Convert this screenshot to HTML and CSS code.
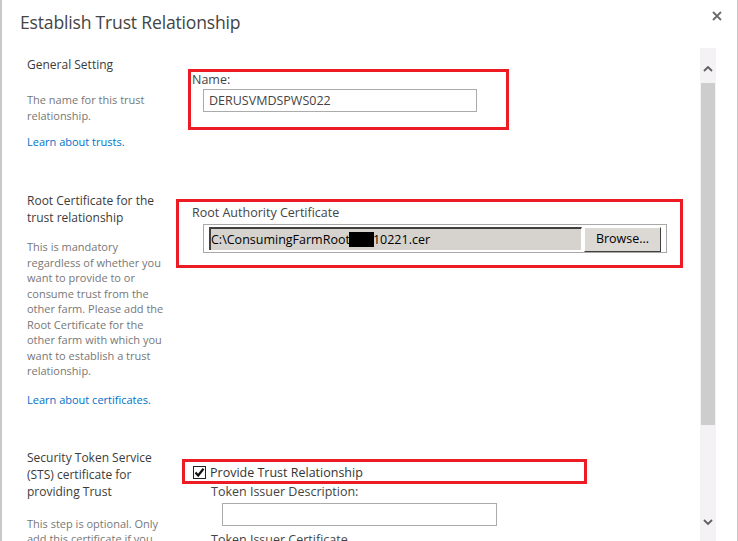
FILE: index.html
```html
<!DOCTYPE html>
<html lang="en">
<head>
<meta charset="utf-8">
<title>Establish Trust Relationship</title>
<link rel="stylesheet" href="styles.css">
</head>
<body>
<div class="dialog">
  <div class="header">
    <h1 class="title">Establish Trust Relationship</h1>
    <span class="close" aria-label="Close">
      <svg width="10" height="10" viewBox="0 0 10 10"><path d="M1 1 L9 9 M9 1 L1 9" stroke="#6a6a6a" stroke-width="1.8" fill="none"/></svg>
    </span>
  </div>
  <div class="body">
    <div class="content">
      <section class="sec sec-general">
        <div class="side">
          <div class="side-title">General Setting</div>
          <p class="side-desc desc-general">The name for this trust<br>relationship.</p>
          <a class="side-link link-general" href="#">Learn about trusts.</a>
        </div>
        <div class="main">
          <div class="callout callout-name">
            <div class="label">Name:</div>
            <div class="text-input name-input">DERUSVMDSPWS022</div>
          </div>
        </div>
      </section>

      <section class="sec sec-root">
        <div class="side">
          <div class="side-title">Root Certificate for the<br>trust relationship</div>
          <p class="side-desc desc-root">This is mandatory<br>regardless of whether you<br>want to provide to or<br>consume trust from the<br>other farm. Please add the<br>Root Certificate for the<br>other farm with which you<br>want to establish a trust<br>relationship.</p>
          <a class="side-link link-root" href="#">Learn about certificates.</a>
        </div>
        <div class="main">
          <div class="callout callout-root">
            <div class="label label-root">Root Authority Certificate</div>
            <div class="file">
              <div class="file-field">C:\ConsumingFarmRoot<span class="redact"></span>10221.cer</div>
              <div class="file-btn">Browse...</div>
            </div>
          </div>
        </div>
      </section>

      <section class="sec sec-sts">
        <div class="side">
          <div class="side-title">Security Token Service<br>(STS) certificate for<br>providing Trust</div>
          <p class="side-desc desc-sts">This step is optional. Only<br>add this certificate if you</p>
        </div>
        <div class="main">
          <div class="callout callout-check">
            <span class="checkbox">
              <svg width="11" height="11" viewBox="0 0 11 11"><path d="M1.5 5.5 L4.2 8.5 L9.5 1.8" stroke="#111" stroke-width="2.2" fill="none"/></svg>
            </span>
            <span class="check-label">Provide Trust Relationship</span>
          </div>
          <div class="label sub-label">Token Issuer Description:</div>
          <div class="text-input desc-input"></div>
          <div class="label sub-label cert-label">Token Issuer Certificate</div>
        </div>
      </section>
    </div>
    <div class="scrollbar">
      <div class="sb-arrow sb-up">
        <svg width="10" height="6" viewBox="0 0 10 6"><path d="M1 5 L5 1 L9 5" stroke="#606060" stroke-width="1.8" fill="none"/></svg>
      </div>
      <div class="sb-thumb"></div>
      <div class="sb-rest">
        <svg width="10" height="6" viewBox="0 0 10 6"><path d="M1 1 L5 5 L9 1" stroke="#606060" stroke-width="1.8" fill="none"/></svg>
      </div>
    </div>
    <div class="gutter"></div>
  </div>
</div>
</body>
</html>
```

FILE: styles.css
```css
html, body {
  margin: 0;
  padding: 0;
  background: #fff;
}

body {
  font-family: "Open Sans", "Noto Sans", sans-serif;
  color: #444;
}

.dialog {
  width: 738px;
  height: 541px;
  box-sizing: border-box;
  border-left: 2px solid #c8c8c8;
  border-right: 1px solid #c8c8c8;
  display: flex;
  flex-direction: column;
  overflow: hidden;
}

.header {
  height: 48px;
  flex: none;
  display: flex;
  justify-content: space-between;
  align-items: flex-start;
}

.title {
  margin: 10px 0 0 18px;
  font-size: 17.6px;
  font-weight: 400;
  line-height: 24px;
  color: #444;
  letter-spacing: -0.2px;
}

.close {
  margin: 11px 15px 0 0;
  display: block;
  width: 10px;
  height: 10px;
}
.close svg { display: block; }

.body {
  flex: 1;
  display: flex;
  min-height: 0;
}

.content {
  width: 698px;
  flex: none;
  padding: 8px 0 0 25px;
  box-sizing: border-box;
  overflow: hidden;
}

.sec {
  display: flex;
}

.side {
  width: 149px;
  flex: none;
}

.main {
  flex: 1;
}

.side-title {
  font-size: 12px;
  line-height: 17px;
  color: #3b3b3b;
}

.side-desc {
  margin: 0;
  font-size: 11px;
  line-height: 15.5px;
  color: #777;
}

.side-link {
  display: block;
  font-size: 11px;
  line-height: 16px;
  color: #0072c6;
  text-decoration: none;
}

.desc-general { margin-top: 19px; }
.link-general { margin-top: 11px; }

.sec-root { margin-top: 42px; }
.desc-root { margin-top: 13px; }
.link-root { margin-top: 13px; }

.sec-sts { margin-top: 41px; }
.desc-sts { margin-top: 16px; }

.callout {
  border: 3px solid #ed1c24;
  box-sizing: border-box;
}

.label {
  font-size: 12.5px;
  line-height: 16px;
  color: #444;
}

.callout-name {
  margin: 13px 0 0 12px;
  width: 321px;
  height: 61px;
  padding: 0 0 0 1px;
}

.text-input {
  box-sizing: border-box;
  height: 23px;
  border: 1px solid #ababab;
  background: #fff;
  font-size: 12.5px;
  line-height: 21px;
  padding: 0 5px;
  color: #444;
}

.name-input {
  margin: 1px 0 0 11px;
  width: 274px;
}

.callout-root {
  margin-top: 7px;
  width: 507px;
  height: 69px;
  padding: 3px 13px 0 13px;
}

.file {
  margin: 3px 0 0 11px;
  height: 29px;
  box-sizing: border-box;
  border: 1px solid #a8a8a8;
  display: flex;
  gap: 2px;
  padding: 2px 5px 0 5px;
}

.file-field {
  flex: 1;
  height: 23px;
  box-sizing: border-box;
  background: #d6d3ce;
  border-top: 2px solid #404040;
  border-left: 2px solid #404040;
  border-right: 1px solid #fff;
  font-size: 12.5px;
  line-height: 21px;
  color: #000;
  padding-left: 0;
  white-space: nowrap;
  overflow: hidden;
}

.redact {
  display: inline-block;
  width: 25px;
  height: 15px;
  background: #000;
  vertical-align: -3px;
  margin-left: -1px;
  margin-right: -1px;
}

.file-btn {
  width: 77px;
  flex: none;
  height: 25px;
  box-sizing: border-box;
  background: #dcd9d4;
  border-top: 1px solid #fff;
  border-left: 1px solid #fff;
  border-right: 1px solid #404040;
  border-bottom: 1px solid #404040;
  font-size: 12.5px;
  line-height: 22px;
  text-align: center;
  color: #000;
}

.callout-check {
  margin: 10px 0 0 6px;
  width: 405px;
  height: 25px;
  display: flex;
  align-items: flex-start;
  padding-left: 8px;
}

.checkbox {
  width: 13px;
  height: 13px;
  box-sizing: border-box;
  border: 1px solid #222;
  display: flex;
  align-items: center;
  justify-content: center;
  background: #fff;
  margin-top: 4px;
}
.checkbox svg { display: block; }

.check-label {
  margin: 3px 0 0 4px;
  font-size: 12.5px;
  line-height: 16px;
  color: #333;
}

.sub-label {
  margin-left: 35px;
}

.desc-input {
  margin: 3px 0 0 46px;
  width: 275px;
}

.cert-label {
  margin-top: 6px;
}

.scrollbar {
  width: 16px;
  flex: none;
  background: #f5f2f5;
  display: flex;
  flex-direction: column;
}

.sb-arrow {
  height: 35px;
  display: flex;
  align-items: center;
  justify-content: center;
  padding-top: 7px;
  box-sizing: border-box;
}
.sb-arrow svg, .sb-rest svg { display: block; }

.sb-thumb {
  height: 342px;
  margin: 0 1px;
  background: #cdcdcd;
}

.sb-rest {
  flex: 1;
  display: flex;
  justify-content: center;
  align-items: flex-end;
  padding-bottom: 16px;
}

.gutter {
  width: 21px;
  flex: none;
}
```
